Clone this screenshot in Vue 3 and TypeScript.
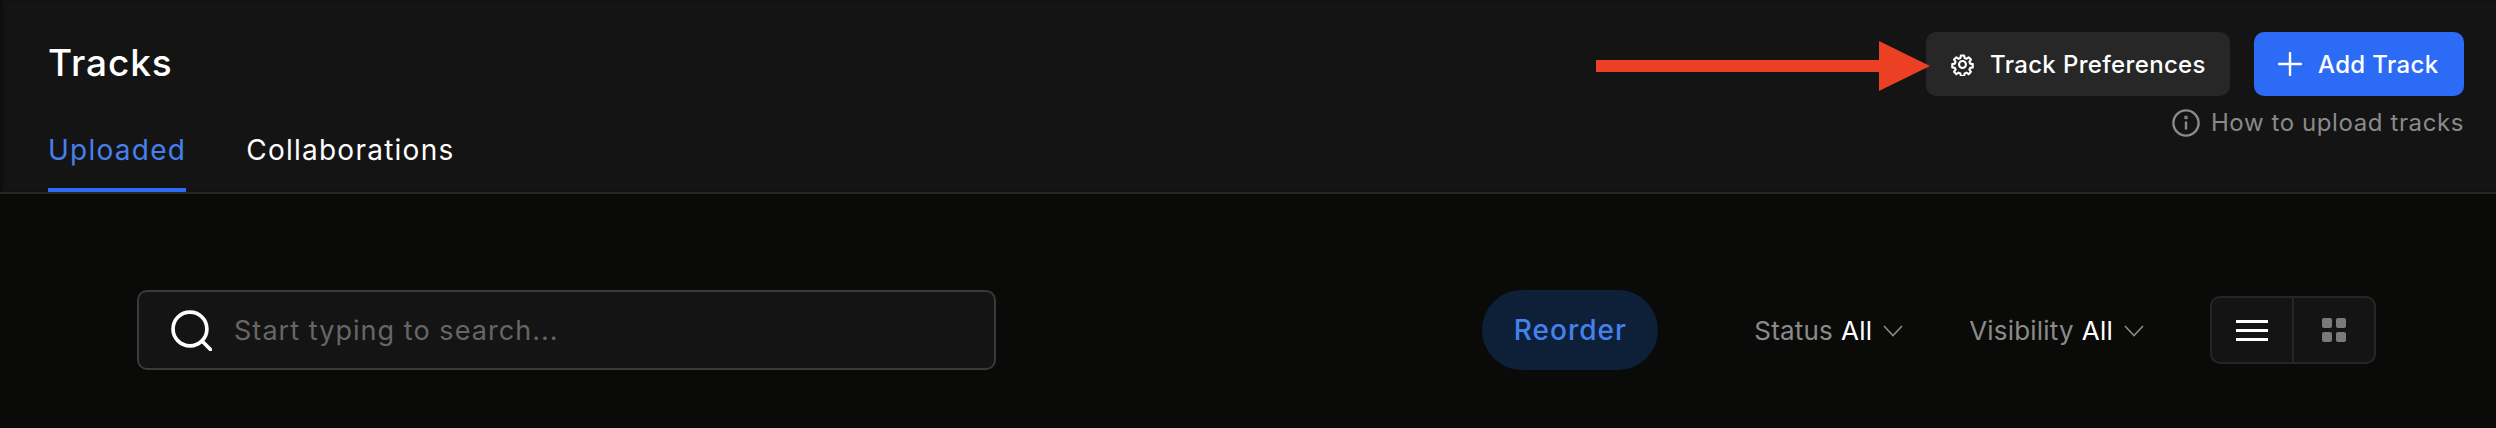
<template>
  <div class="page">
    <header class="top">
      <div class="top-row">
        <h1 class="title">Tracks</h1>
        <div class="actions">
          <div class="action-row">
            <button type="button" class="btn btn-dark">
              <svg class="gear" viewBox="0 0 24 24" fill="none" stroke="currentColor" stroke-width="2.2" stroke-linecap="round" stroke-linejoin="round">
                <circle cx="12" cy="12" r="3.6" />
                <path d="M10.3 2.6h3.4l.5 2.7 1.9.8 2.3-1.6 2.4 2.4-1.6 2.3.8 1.9 2.7.5v3.4l-2.7.5-.8 1.9 1.6 2.3-2.4 2.4-2.3-1.6-1.9.8-.5 2.7h-3.4l-.5-2.7-1.9-.8-2.3 1.6-2.4-2.4 1.6-2.3-.8-1.9-2.7-.5v-3.4l2.7-.5.8-1.9-1.6-2.3 2.4-2.4 2.3 1.6 1.9-.8z" />
              </svg>
              <span>Track Preferences</span>
            </button>
            <button type="button" class="btn btn-blue">
              <svg class="plus" viewBox="0 0 24 24" fill="none" stroke="currentColor" stroke-width="2.4" stroke-linecap="round">
                <path d="M12 1v22M1 12h22" />
              </svg>
              <span>Add Track</span>
            </button>
          </div>
          <a class="how-to">
            <svg class="info" viewBox="0 0 28 28" fill="none" stroke="currentColor" stroke-width="2.4">
              <circle cx="14" cy="14" r="12.6" />
              <path d="M14 12.5v8" />
              <circle cx="14" cy="8.4" r="0.7" />
            </svg>
            <span>How to upload tracks</span>
          </a>
        </div>
      </div>
      <nav class="tabs">
        <a v-for="tab in tabs" :key="tab" class="tab" :class="{ active: tab === activeTab }">{{ tab }}</a>
      </nav>
      <!-- red annotation arrow on top of the screenshot -->
      <svg class="arrow" viewBox="0 0 334 50" fill="#eb4023">
        <path d="M0 19h283V0l51 25-51 25V31H0z" />
      </svg>
    </header>

    <section class="toolbar">
      <div class="search">
        <svg class="search-icon" viewBox="0 0 40 40" fill="none" stroke="#fff" stroke-width="3.6" stroke-linecap="round">
          <circle cx="18.5" cy="18.5" r="16.5" />
          <path d="M30.5 30.5l8 8" />
        </svg>
        <input class="search-input" type="text" placeholder="Start typing to search..." />
      </div>
      <div class="controls">
        <button type="button" class="reorder">Reorder</button>
        <div class="filters">
          <div v-for="f in filters" :key="f" class="filter">
            <span class="filter-name">{{ f }}</span>
            <span class="filter-value">All</span>
            <svg class="chevron" viewBox="0 0 20 12" fill="none" stroke="currentColor" stroke-width="1.6">
              <path d="M1 1l9 9.5L19 1" />
            </svg>
          </div>
        </div>
        <div class="view-toggle">
          <div class="view-btn">
            <span class="lines"><i /><i /><i /></span>
          </div>
          <div class="view-btn">
            <span class="squares"><i /><i /><i /><i /></span>
          </div>
        </div>
      </div>
    </section>
  </div>
</template>

<script setup lang="ts">
const tabs: string[] = ["Uploaded", "Collaborations"];
const activeTab = "Uploaded";
const filters: string[] = ["Status", "Visibility"];
</script>

<style scoped>
.page {
  width: 2496px;
  height: 428px;
  background: #0a0a09;
  font-family: Inter, "Open Sans", sans-serif;
  overflow: hidden;
}

.top {
  position: relative;
  height: 194px;
  box-sizing: border-box;
  background: #141414;
  border-bottom: 2px solid #262626;
  box-shadow: inset 4px 0 4px -2px rgba(0, 0, 0, 0.4);
  padding: 32px 32px 0 48px;
  display: flex;
  flex-direction: column;
}

.top-row {
  display: flex;
  justify-content: space-between;
  align-items: flex-start;
  height: 96px;
}

.title {
  margin: 8px 0 0;
  font-size: 37px;
  line-height: 46px;
  font-weight: 500;
  color: #fff;
  letter-spacing: 0.9px;
}

.actions {
  display: flex;
  flex-direction: column;
  align-items: flex-end;
}

.action-row {
  display: flex;
  gap: 24px;
}

.btn {
  height: 64px;
  border: none;
  border-radius: 10px;
  color: #fff;
  font-family: inherit;
  font-size: 24px;
  font-weight: 500;
  letter-spacing: 0.35px;
  display: flex;
  align-items: center;
  padding: 0;
}

.btn-dark {
  width: 304px;
  background: #272727;
  padding-left: 25px;
  gap: 16px;
}

.btn-blue {
  width: 210px;
  background: #2c6bf6;
  padding-left: 24px;
  gap: 16px;
}

.gear {
  width: 23px;
  height: 23px;
}

.plus {
  width: 24px;
  height: 24px;
}

.how-to {
  margin-top: 12px;
  display: flex;
  align-items: center;
  gap: 11px;
  color: #8a8a8a;
  font-size: 24px;
  line-height: 30px;
  letter-spacing: 0.6px;
}

.info {
  width: 28px;
  height: 28px;
}

.tabs {
  display: flex;
  gap: 60px;
  margin-top: 4px;
  height: 60px;
}

.tab {
  box-sizing: border-box;
  height: 60px;
  padding: 0;
  font-size: 28px;
  line-height: 36px;
  letter-spacing: 1.25px;
  color: #fff;
}

.tab.active {
  color: #4580ee;
  border-bottom: 4px solid #2c6bf6;
}

.arrow {
  position: absolute;
  left: 1596px;
  top: 41px;
  width: 334px;
  height: 50px;
}

.toolbar {
  display: flex;
  justify-content: space-between;
  align-items: center;
  padding: 96px 120px 0 137px;
}

.search {
  box-sizing: border-box;
  width: 859px;
  height: 80px;
  background: #141414;
  border: 2px solid #3a3a3a;
  border-radius: 10px;
  display: flex;
  align-items: center;
  padding-left: 32px;
  gap: 22px;
}

.search-icon {
  width: 41px;
  height: 41px;
  flex: none;
}

.search-input {
  flex: 1;
  background: none;
  border: none;
  outline: none;
  padding: 0;
  font-family: inherit;
  font-size: 27px;
  letter-spacing: 1.05px;
  color: #fff;
}

.search-input::placeholder {
  color: #666;
  opacity: 1;
}

.controls {
  display: flex;
  align-items: center;
}

.reorder {
  width: 176px;
  height: 80px;
  border: none;
  border-radius: 40px;
  background: #0e2038;
  color: #4580ee;
  font-family: inherit;
  font-size: 28px;
  font-weight: 500;
  letter-spacing: 1px;
}

.filters {
  display: flex;
  gap: 66px;
  margin-left: 96px;
  margin-right: 66px;
}

.filter {
  display: flex;
  align-items: center;
  font-size: 26px;
  letter-spacing: 0.2px;
  color: #8a8a8a;
}

.filter-value {
  color: #fff;
  margin-left: 8px;
}

.chevron {
  width: 20px;
  height: 12px;
  margin-left: 11px;
  margin-top: 2px;
}

.view-toggle {
  box-sizing: border-box;
  width: 166px;
  height: 68px;
  display: flex;
  background: #141414;
  border: 2px solid #262626;
  border-radius: 10px;
}

.view-btn {
  flex: 1;
  display: flex;
  align-items: center;
  justify-content: center;
}

.view-btn + .view-btn {
  border-left: 2px solid #262626;
}

.lines {
  display: flex;
  flex-direction: column;
  gap: 6px;
}

.lines i {
  display: block;
  width: 32px;
  height: 3px;
  background: #fff;
}

.squares {
  display: grid;
  grid-template-columns: 10px 10px;
  gap: 4px;
}

.squares i {
  display: block;
  width: 10px;
  height: 10px;
  border-radius: 2px;
  background: #7a7a7a;
}
</style>

<style>
html,
body {
  margin: 0;
  background: #0a0a09;
}
</style>
